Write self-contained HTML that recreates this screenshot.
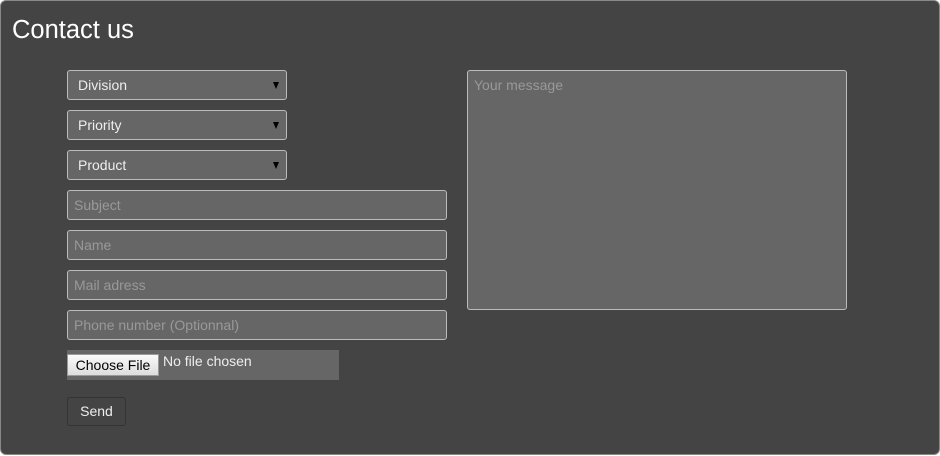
<!DOCTYPE html>
<html><head><style>
html,body{margin:0;padding:0;background:#fff;width:940px;height:456px;overflow:hidden;font-family:"Liberation Sans",sans-serif}
.box{position:absolute;left:0;top:0;width:938px;height:453px;background:#444;border:1px solid #888;border-radius:6px}
h1{position:absolute;left:12px;top:16px;margin:0;font-weight:normal;font-size:25.5px;color:#fff}
.f{position:absolute;box-sizing:border-box;background:#666;border:1px solid #bbb;border-radius:3px;color:#999;font-size:14px;padding:0 6px;line-height:28px;height:30px}
.s{color:#eee;padding-left:10px}
.s:after{content:"";position:absolute;right:7px;top:11px;border-left:3px solid transparent;border-right:3px solid transparent;border-top:7px solid #000}
</style></head><body>
<div class="box"></div>
<h1>Contact us</h1>
<div class="f s" style="left:67px;top:70px;width:220px">Division</div>
<div class="f s" style="left:67px;top:110px;width:220px">Priority</div>
<div class="f s" style="left:67px;top:150px;width:220px">Product</div>
<div class="f" style="left:67px;top:190px;width:380px">Subject</div>
<div class="f" style="left:67px;top:230px;width:380px">Name</div>
<div class="f" style="left:67px;top:270px;width:380px">Mail adress</div>
<div class="f" style="left:67px;top:310px;width:380px">Phone number (Optionnal)</div>
<div class="f" style="left:467px;top:70px;width:380px;height:240px;line-height:28px">Your message</div>
<div style="position:absolute;left:67px;top:350px;width:272px;height:30px;background:#666"></div>
<div style="position:absolute;left:67px;top:354px;width:92px;height:22px;box-sizing:border-box;background:linear-gradient(#fafafa,#ddd);border:1px solid #999;font-size:14px;line-height:20px;text-align:center;color:#000">Choose File</div>
<div style="position:absolute;left:163px;top:353px;font-size:14px;color:#eee">No file chosen</div>
<div style="position:absolute;left:67px;top:397px;width:59px;height:29px;box-sizing:border-box;border:1px solid #333;border-radius:3px;background:#444;color:#eee;font-size:14px;line-height:27px;text-align:center">Send</div>
</body></html>
